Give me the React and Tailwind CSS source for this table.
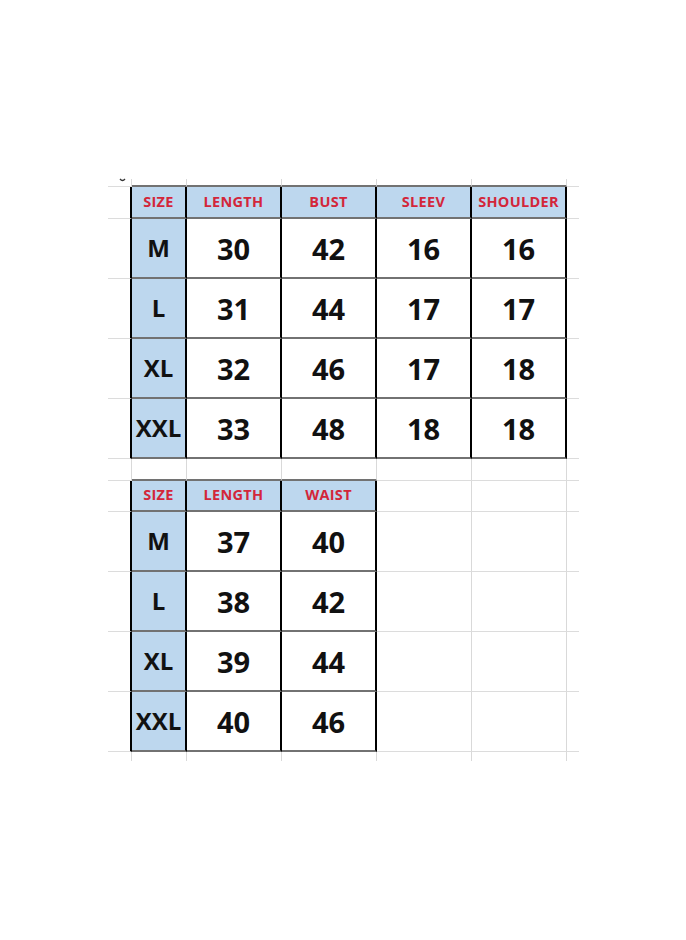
import React from 'react';

const rowHeights = [8, 32, 60, 60, 60, 60, 22, 31, 60, 60, 60, 60, 9];
const colCount = 7;

// spreadsheet content keyed by row, columns 1..n
const content = {
  1: ['SIZE', 'LENGTH', 'BUST', 'SLEEV', 'SHOULDER'],
  2: ['M', '30', '42', '16', '16'],
  3: ['L', '31', '44', '17', '17'],
  4: ['XL', '32', '46', '17', '18'],
  5: ['XXL', '33', '48', '18', '18'],
  7: ['SIZE', 'LENGTH', 'WAIST'],
  8: ['M', '37', '40'],
  9: ['L', '38', '42'],
  10: ['XL', '39', '44'],
  11: ['XXL', '40', '46'],
};

const inTable = (r, c) => {
  if (r >= 1 && r <= 5 && c >= 1 && c <= 5) return true;
  if (r >= 7 && r <= 11 && c >= 1 && c <= 3) return true;
  return false;
};

const isHeader = (r) => r === 1 || r === 7;

const Cell = ({ r, c }) => {
  let right = '';
  if (c < colCount - 1) {
    right = inTable(r, c) || inTable(r, c + 1) ? 'border-r-2 border-r-black' : 'border-r border-r-[#d9d9d9]';
  }
  let bottom = '';
  if (r < rowHeights.length - 1) {
    bottom = inTable(r, c) || inTable(r + 1, c) ? 'border-b-2 border-b-[#727272]' : 'border-b border-b-[#dcdcdc]';
  }
  const table = inTable(r, c);
  const blue = table && (isHeader(r) || c === 1);
  const text = content[r] ? content[r][c - 1] : null;

  let textCls = '';
  if (table && isHeader(r)) textCls = 'text-[14.5px] font-bold text-[#d3263a] tracking-[0.3px]';
  else if (table && c === 1) textCls = 'text-[24px] font-bold text-[#111]';
  else if (table) textCls = 'text-[29px] font-bold text-[#111]';

  return (
    <div className={`${right} ${bottom} ${blue ? 'bg-[#bdd7ee]' : 'bg-white'} flex items-center justify-center leading-none ${textCls}`}>
      {r === 0 && c === 0 && (
        <svg width="7" height="5" viewBox="0 0 7 5" className="self-start ml-[6px] -mt-[1px]">
          <path d="M1 1 Q3.5 4 6 1" stroke="#333" strokeWidth="1.3" fill="none" />
        </svg>
      )}
      {text}
    </div>
  );
};

export default function App() {
  const cells = [];
  for (let r = 0; r < rowHeights.length; r++) {
    for (let c = 0; c < colCount; c++) {
      cells.push(<Cell key={`${r}-${c}`} r={r} c={c} />);
    }
  }

  return (
    <div className="min-h-[940px] w-[686px] bg-white pt-[179px] pl-[108px]" style={{ fontFamily: '"Open Sans", "Noto Sans", sans-serif' }}>
      <div className="grid w-max grid-cols-[24px_55px_95px_95px_95px_95px_12px] grid-rows-[8px_32px_60px_60px_60px_60px_22px_31px_60px_60px_60px_60px_9px]">
        {cells}
      </div>
    </div>
  );
}
